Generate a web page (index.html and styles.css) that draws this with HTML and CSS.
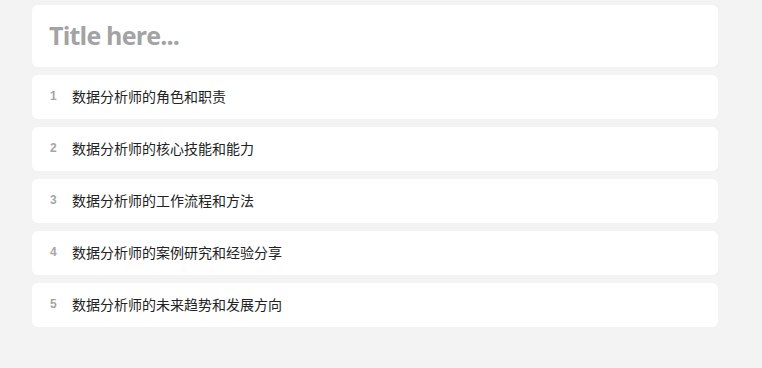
FILE: index.html
```html
<!DOCTYPE html>
<html>
<head>
<meta charset="utf-8">
<link rel="stylesheet" href="styles.css">
</head>
<body>
<div class="wrap">
  <div class="title-card"><div class="title">Title here...</div></div>
  <div class="item"><span class="num">1</span><span class="text">数据分析师的角色和职责</span></div>
  <div class="item"><span class="num">2</span><span class="text">数据分析师的核心技能和能力</span></div>
  <div class="item"><span class="num">3</span><span class="text">数据分析师的工作流程和方法</span></div>
  <div class="item"><span class="num">4</span><span class="text">数据分析师的案例研究和经验分享</span></div>
  <div class="item"><span class="num">5</span><span class="text">数据分析师的未来趋势和发展方向</span></div>
</div>
</body>
</html>
```
FILE: styles.css
```css
html, body { margin: 0; padding: 0; background: #f3f3f3; }
body { font-family: "Open Sans", "Noto Sans CJK SC", sans-serif; }
.wrap {
  width: 686px;
  margin-left: 32px;
  padding-top: 5px;
  display: flex;
  flex-direction: column;
  gap: 8px;
}
.title-card {
  background: #fff;
  border-radius: 6px;
  height: 62px;
  display: flex;
  align-items: center;
  padding: 0 17px 2px;
  box-sizing: border-box;
}
.title {
  font-family: "Open Sans", sans-serif;
  font-weight: 700;
  font-size: 25px;
  color: #a3a3a3;
  letter-spacing: -0.8px;
}
.item {
  background: #fff;
  border-radius: 6px;
  height: 44px;
  display: flex;
  align-items: center;
  padding: 0 0 2px 18px;
  box-sizing: border-box;
}
.num {
  width: 22px;
  font-family: "Liberation Sans", sans-serif;
  font-size: 12px;
  font-weight: 700;
  color: #a5a5a5;
}
.text {
  font-family: "Noto Sans CJK SC", sans-serif;
  font-size: 14px;
  color: #222;
}
```
